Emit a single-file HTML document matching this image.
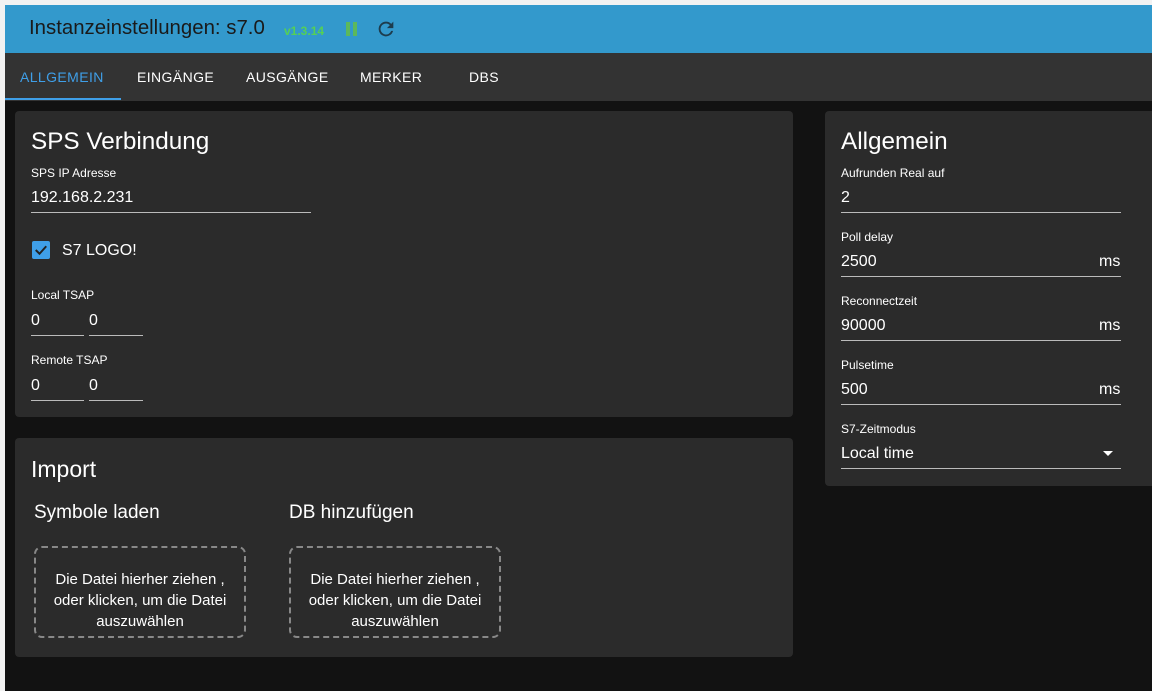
<!DOCTYPE html>
<html><head><meta charset="utf-8"><style>
*{box-sizing:border-box;margin:0;padding:0}
body{width:1152px;height:691px;overflow:hidden;background:#f2f2f2;font-family:"Liberation Sans",Arial,sans-serif;position:relative;color:#fff}
.main{position:absolute;left:5px;top:5px;right:0;bottom:0;background:#121212}
.hdr{position:absolute;left:5px;top:5px;width:1147px;height:48px;background:#3399cc}
.hdr .t{position:absolute;left:24px;top:12px;font-size:20.4px;color:#1a1a1a}
.hdr .v{position:absolute;left:279px;top:19px;font-size:12px;font-weight:bold;color:#55d055}
.tabs{position:absolute;left:5px;top:53px;width:1147px;height:48px;background:#333}
.tab{position:absolute;top:16px;font-size:14px;color:#fff;letter-spacing:0.4px}
.ind{position:absolute;left:0;top:45px;width:116px;height:2px;background:#3f9fe8}
.card{position:absolute;background:#2b2b2b;border-radius:4px}
.h{position:absolute;font-size:24.3px}
.lbl{position:absolute;font-size:12px}
.val{position:absolute;font-size:16px}
.ln{position:absolute;height:1px;background:#bbb}
.ms{position:absolute;font-size:16px}
.drop{position:absolute;width:212px;height:92px;border:2px dashed #888;border-radius:8px;font-size:15px;text-align:center;line-height:21px;padding-top:21px}
</style></head><body>
<div class="main"></div>
<div class="hdr"><div class="t">Instanzeinstellungen: s7.0</div><div class="v">v1.3.14</div>
<div style="position:absolute;left:341px;top:17px;width:4px;height:14px;background:#5cb85c"></div>
<div style="position:absolute;left:348px;top:17px;width:4px;height:14px;background:#5cb85c"></div>
<svg style="position:absolute;left:370px;top:13px" width="22" height="22" viewBox="0 0 24 24"><path fill="#1d3c4d" d="M17.65 6.35A7.96 7.96 0 0 0 12 4a8 8 0 1 0 7.730 10h-2.08A6 6 0 1 1 12 6c1.66 0 3.14.69 4.22 1.78L13 11h7V4l-2.35 2.35z"/></svg>
</div>
<div class="tabs">
<div class="tab" style="left:15px;color:#3f9fe8">ALLGEMEIN</div>
<div class="tab" style="left:132px">EINGÄNGE</div>
<div class="tab" style="left:241px">AUSGÄNGE</div>
<div class="tab" style="left:355px">MERKER</div>
<div class="tab" style="left:464px">DBS</div>
<div class="ind"></div></div>

<div class="card" style="left:15px;top:111px;width:778px;height:306px">
<div class="h" style="left:16px;top:17px">SPS Verbindung</div>
<div class="lbl" style="left:16px;top:55px">SPS IP Adresse</div>
<div class="val" style="left:16px;top:78px">192.168.2.231</div>
<div class="ln" style="left:16px;top:101px;width:280px"></div>
<div style="position:absolute;left:17px;top:130px;width:18px;height:18px;background:#3f9fe8;border-radius:2px"><svg width="18" height="18" viewBox="0 0 24 24"><path d="M5 12l5 5 9-10" stroke="#222" stroke-width="2.6" fill="none"/></svg></div>
<div class="val" style="left:47px;top:131px">S7 LOGO!</div>
<div class="lbl" style="left:16px;top:177px">Local TSAP</div>
<div class="val" style="left:16px;top:201px">0</div><div class="val" style="left:74px;top:201px">0</div>
<div class="ln" style="left:16px;top:224px;width:53px"></div><div class="ln" style="left:74px;top:224px;width:54px"></div>
<div class="lbl" style="left:16px;top:242px">Remote TSAP</div>
<div class="val" style="left:16px;top:266px">0</div><div class="val" style="left:74px;top:266px">0</div>
<div class="ln" style="left:16px;top:289px;width:53px"></div><div class="ln" style="left:74px;top:289px;width:54px"></div>
</div>

<div class="card" style="left:15px;top:438px;width:778px;height:219px">
<div class="h" style="left:16px;top:18px;font-size:23px">Import</div>
<div style="position:absolute;left:19px;top:64px;font-size:19px">Symbole laden</div>
<div style="position:absolute;left:274px;top:64px;font-size:19px">DB hinzufügen</div>
<div class="drop" style="left:19px;top:108px">Die Datei hierher ziehen ,<br>oder klicken, um die Datei<br>auszuwählen</div>
<div class="drop" style="left:274px;top:108px">Die Datei hierher ziehen ,<br>oder klicken, um die Datei<br>auszuwählen</div>
</div>

<div class="card" style="left:825px;top:111px;width:340px;height:375px">
<div class="h" style="left:16px;top:17px">Allgemein</div>
<div class="lbl" style="left:16px;top:55px">Aufrunden Real auf</div>
<div class="val" style="left:16px;top:78px">2</div>
<div class="ln" style="left:16px;top:101px;width:280px"></div>
<div class="lbl" style="left:16px;top:119px">Poll delay</div>
<div class="val" style="left:16px;top:142px">2500</div><div class="ms" style="left:274px;top:142px">ms</div>
<div class="ln" style="left:16px;top:165px;width:280px"></div>
<div class="lbl" style="left:16px;top:183px">Reconnectzeit</div>
<div class="val" style="left:16px;top:206px">90000</div><div class="ms" style="left:274px;top:206px">ms</div>
<div class="ln" style="left:16px;top:229px;width:280px"></div>
<div class="lbl" style="left:16px;top:247px">Pulsetime</div>
<div class="val" style="left:16px;top:270px">500</div><div class="ms" style="left:274px;top:270px">ms</div>
<div class="ln" style="left:16px;top:293px;width:280px"></div>
<div class="lbl" style="left:16px;top:311px">S7-Zeitmodus</div>
<div class="val" style="left:16px;top:334px">Local time</div>
<div style="position:absolute;left:278px;top:340px;border-left:5px solid transparent;border-right:5px solid transparent;border-top:5px solid #fff"></div>
<div class="ln" style="left:16px;top:357px;width:280px"></div>
</div>
</body></html>
